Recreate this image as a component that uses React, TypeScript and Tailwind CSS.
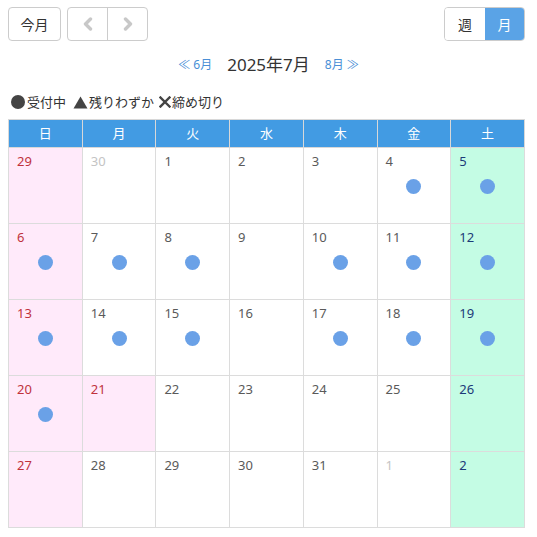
import React from 'react';

type Day = { d: number; kind?: 'sun' | 'sat' | 'hol' | 'other'; dot?: boolean };

const weeks: Day[][] = [
  [{ d: 29, kind: 'sun' }, { d: 30, kind: 'other' }, { d: 1 }, { d: 2 }, { d: 3 }, { d: 4, dot: true }, { d: 5, kind: 'sat', dot: true }],
  [{ d: 6, kind: 'sun', dot: true }, { d: 7, dot: true }, { d: 8, dot: true }, { d: 9 }, { d: 10, dot: true }, { d: 11, dot: true }, { d: 12, kind: 'sat', dot: true }],
  [{ d: 13, kind: 'sun', dot: true }, { d: 14, dot: true }, { d: 15, dot: true }, { d: 16 }, { d: 17, dot: true }, { d: 18, dot: true }, { d: 19, kind: 'sat', dot: true }],
  [{ d: 20, kind: 'sun', dot: true }, { d: 21, kind: 'hol' }, { d: 22 }, { d: 23 }, { d: 24 }, { d: 25 }, { d: 26, kind: 'sat' }],
  [{ d: 27, kind: 'sun' }, { d: 28 }, { d: 29 }, { d: 30 }, { d: 31 }, { d: 1, kind: 'other' }, { d: 2, kind: 'sat' }],
];

const dows = ['日', '月', '火', '水', '木', '金', '土'];

const cellStyle = (kind?: Day['kind']) => {
  if (kind === 'sun' || kind === 'hol') return 'bg-[#ffeafa] text-[#c0323c]';
  if (kind === 'sat') return 'bg-[#c4fce4] text-[#1c3a78]';
  if (kind === 'other') return 'bg-white text-[#c4c4c4]';
  return 'bg-white text-[#5a5a5a]';
};

const Chevron = ({ dir }: { dir: 'l' | 'r' }) => (
  <svg width="12" height="14" viewBox="0 0 12 14">
    <path
      d={dir === 'l' ? 'M8.5 2 L3.5 7 L8.5 12' : 'M3.5 2 L8.5 7 L3.5 12'}
      fill="none"
      stroke="#c8c8c8"
      strokeWidth="3.4"
      strokeLinecap="round"
      strokeLinejoin="round"
    />
  </svg>
);

export default function App() {
  return (
    <div className="w-[537px] h-[537px] bg-white px-2 pt-[7px] text-[#333]" style={{ fontFamily: '"Noto Sans", "Noto Sans CJK JP", sans-serif' }}>
      {/* toolbar */}
      <div className="flex w-[517px] items-center justify-between">
        <div className="flex items-center gap-[6px]">
          <button className="h-[34px] w-[53px] rounded-[4px] border border-[#ccc] bg-white text-[14px] text-[#333]">今月</button>
          <div className="flex h-[34px] rounded-[4px] border border-[#ccc]">
            <button className="flex w-[40px] items-center justify-center border-r border-[#ccc]">
              <Chevron dir="l" />
            </button>
            <button className="flex w-[39px] items-center justify-center">
              <Chevron dir="r" />
            </button>
          </div>
        </div>
        <div className="flex h-[34px] overflow-hidden rounded-[4px] border border-[#ccc]">
          <button className="w-[40px] bg-white text-[14px] text-[#333]">週</button>
          <button className="w-[39px] bg-[#5aa3e6] text-[14px] text-white">月</button>
        </div>
      </div>

      {/* month title */}
      <div className="mt-[11px] flex w-[517px] items-center justify-center pl-[4px]">
        <span className="text-[12px] text-[#4a8fd6]">≪ 6月</span>
        <span className="mx-[15px] text-[17px] text-[#333]">2025年7月</span>
        <span className="text-[12px] text-[#4a8fd6]">8月 ≫</span>
      </div>

      {/* legend */}
      <div className="mt-[15px] flex items-center pl-[3px] text-[13px] text-[#333]">
        <span className="mr-[2px] inline-block h-[14px] w-[14px] rounded-full bg-[#444]" />
        <span>受付中</span>
        <svg className="ml-[7px] mr-[1px]" width="15" height="13" viewBox="0 0 15 13">
          <path d="M7.5 0.5 L14.5 12.5 L0.5 12.5 Z" fill="#444" />
        </svg>
        <span>残りわずか</span>
        <svg className="ml-[5px] mr-[1px]" width="12" height="12" viewBox="0 0 12 12">
          <path d="M1.5 1.5 L10.5 10.5 M10.5 1.5 L1.5 10.5" stroke="#444" strokeWidth="2.4" strokeLinecap="square" />
        </svg>
        <span>締め切り</span>
      </div>

      {/* calendar */}
      <table className="mt-[7px] w-[517px] table-fixed border-collapse text-[13px]">
        <thead>
          <tr>
            {dows.map((w, i) => (
              <th
                key={w}
                className={`h-[28px] border border-[#d8d8d8] bg-[#429be3] font-normal text-white ${i > 0 ? 'border-l-[#c9e2f7]' : ''}`}
              >
                {w}
              </th>
            ))}
          </tr>
        </thead>
        <tbody>
          {weeks.map((wk, r) => (
            <tr key={r}>
              {wk.map((day, c) => (
                <td key={c} className={`h-[76px] border border-[#dcdcdc] p-0 align-top ${cellStyle(day.kind)}`}>
                  <div className="flex h-[75px] flex-col">
                    <div className="px-[8px] pt-[4px] leading-[18px]">{day.d}</div>
                    {day.dot && (
                      <div className="mt-[9px] flex justify-center">
                        <span className="inline-block h-[15px] w-[15px] rounded-full bg-[#6aa1e7]" />
                      </div>
                    )}
                  </div>
                </td>
              ))}
            </tr>
          ))}
        </tbody>
      </table>
    </div>
  );
}
